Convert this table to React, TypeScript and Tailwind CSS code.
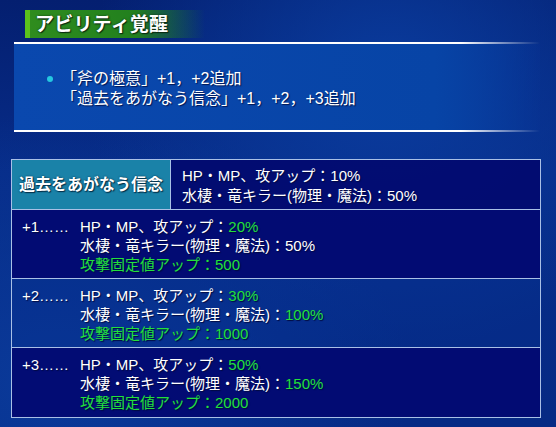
import React from 'react'

type Row = {
  label: string
  stat: string
  killer: string
  fixed: string
  shade: boolean
}

const rows: Row[] = [
  { label: '+1……', stat: '20%', killer: '50%', fixed: '500', shade: true },
  { label: '+2……', stat: '30%', killer: '100%', fixed: '1000', shade: false },
  { label: '+3……', stat: '50%', killer: '150%', fixed: '2000', shade: true },
]

const font = "font-['Liberation_Sans','Noto_Sans_CJK_JP',sans-serif]"

export default function App() {
  return (
    <div
      className={`w-[556px] h-[427px] overflow-hidden text-white ${font} bg-[#062a82] bg-[radial-gradient(ellipse_at_70%_20%,#0a3c9e_0%,transparent_55%),radial-gradient(ellipse_at_10%_90%,#0a3a9a_0%,transparent_50%),linear-gradient(180deg,#041f70_0%,#072c88_40%,#062a84_100%)] pt-[10px]`}
    >
      {/* タイトル */}
      <div className="ml-[25px] w-[180px] h-[28px] flex items-center border-l-[5px] border-[#5cc21c] bg-[linear-gradient(90deg,#2f8c1e_0%,#22801e_60%,rgba(20,100,60,0)_100%)]">
        <h2 className="pl-[5px] text-[19px] font-bold leading-none tracking-[0.2px] [text-shadow:0_0_2px_#0a2a10,1px_1px_1px_#0a2a10]">
          アビリティ覚醒
        </h2>
      </div>

      {/* 説明 */}
      <div className="mt-[4px] ml-[14px] w-[526px] h-[2px] bg-[linear-gradient(90deg,#ffffff_0%,#ffffff_85%,rgba(255,255,255,0)_100%)]" />
      <div className="ml-[14px] w-[526px] h-[86px] bg-[linear-gradient(90deg,#0a48ae_0%,#0744a6_80%,rgba(6,50,150,0.3)_100%)] pl-[33px] pt-[25px]">
        <div className="flex items-start gap-[10px] text-[16px] leading-[20px] [text-shadow:1px_1px_1px_#021550]">
          <span className="mt-[7px] w-[6px] h-[6px] rounded-full bg-[#25c8e0] shrink-0" />
          <div className="-ml-[2px]">
            <div>「斧の極意」+1，+2追加</div>
            <div>「過去をあがなう信念」+1，+2，+3追加</div>
          </div>
        </div>
      </div>
      <div className="ml-[14px] w-[526px] h-[2px] bg-[linear-gradient(90deg,#ffffff_0%,#ffffff_85%,rgba(255,255,255,0)_100%)]" />

      {/* 表 */}
      <div className="mt-[27px] ml-[11px] w-[530px] border border-[#a9c0e6] text-[15px] leading-[19px] [text-shadow:1px_1px_1px_#020a40]">
        <div className="flex h-[50px] border-b border-[#a9c0e6]">
          <div className="w-[159px] shrink-0 flex items-center justify-center bg-[#1a82a8] border-r border-[#a9c0e6] text-[16px] font-bold [text-shadow:0_0_2px_#04304a,1px_1px_1px_#04304a]">
            過去をあがなう信念
          </div>
          <div className="flex-1 bg-[#020b70]/95 pl-[11px] pt-[6px]">
            <div>HP・MP、攻アップ：10%</div>
            <div className="mt-[1px]">水棲・竜キラー(物理・魔法)：50%</div>
          </div>
        </div>
        {rows.map((r, i) => (
          <div
            key={r.label}
            className={`flex h-[69px] pt-[7px] ${i < rows.length - 1 ? 'border-b border-[#a9c0e6]' : ''} ${r.shade ? 'bg-[#020a72]/95' : 'bg-[#062c8c]/40'}`}
          >
            <div className="w-[68px] shrink-0 pl-[10px]">{r.label}</div>
            <div>
              <div>
                HP・MP、攻アップ：<span className="text-[#22e03c]">{r.stat}</span>
              </div>
              <div>
                水棲・竜キラー(物理・魔法)：
                <span className={r.killer === '50%' ? '' : 'text-[#22e03c]'}>{r.killer}</span>
              </div>
              <div className="text-[#22e03c]">攻撃固定値アップ：{r.fixed}</div>
            </div>
          </div>
        ))}
      </div>
    </div>
  )
}
